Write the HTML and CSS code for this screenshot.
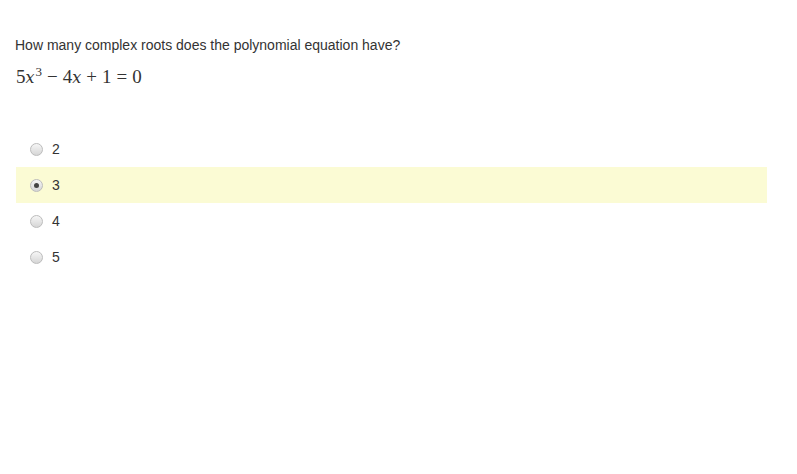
FILE: index.html
```html
<!DOCTYPE html>
<html lang="en">
<head>
  <meta charset="UTF-8" />
  <title>Question</title>
  <link rel="stylesheet" href="styles.css">
</head>
<body>
  <div class="question">
    <p class="prompt">How many complex roots does the polynomial equation have?</p>
    <p class="math"><span class="num">5</span><i>x</i><sup>3</sup><span class="op">&minus;</span><span class="num">4</span><i>x</i><span class="op">+</span><span class="num">1</span><span class="op">=</span><span class="num">0</span></p>

    <ul class="choices">
      <li class="choice"><span class="radio"></span>2</li>
      <li class="choice selected"><span class="radio checked"></span>3</li>
      <li class="choice"><span class="radio"></span>4</li>
      <li class="choice"><span class="radio"></span>5</li>
    </ul>
  </div>
</body>
</html>
```

FILE: styles.css
```css
body {
  margin: 0;
  font-family: "Liberation Sans", Arial, sans-serif;
  font-size: 14px;
  color: #333;
  background: #fff;
}

.question {
  padding: 37px 30px 0 15px;
}

.prompt {
  margin: 0;
  line-height: 16px;
}

.math {
  margin: 14px 0 0 1px;
  font-family: "Liberation Serif", "DejaVu Serif", serif;
  font-size: 19px;
  line-height: 20px;
  color: #333;
}

.math i {
  font-family: "DejaVu Serif", serif;
  font-size: 16px;
}

.math sup {
  font-size: 13px;
  vertical-align: 7px;
  line-height: 0;
  margin-left: 1px;
}

.math .op {
  margin: 0 5px;
}

.choices {
  list-style: none;
  margin: 43px 0 0 1px;
  padding: 0;
}

.choice {
  display: flex;
  align-items: center;
  height: 36px;
  padding-left: 14px;
  color: #333;
}

.choice.selected {
  background: #fbfbd4;
}

.radio {
  width: 11px;
  height: 11px;
  border: 1px solid #bcbcbc;
  border-radius: 50%;
  background: linear-gradient(#f6f6f6, #d6d6d6);
  margin-right: 9px;
  position: relative;
}

.radio.checked::after {
  content: "";
  position: absolute;
  left: 3px;
  top: 3px;
  width: 5px;
  height: 5px;
  border-radius: 50%;
  background: #444;
}
```
